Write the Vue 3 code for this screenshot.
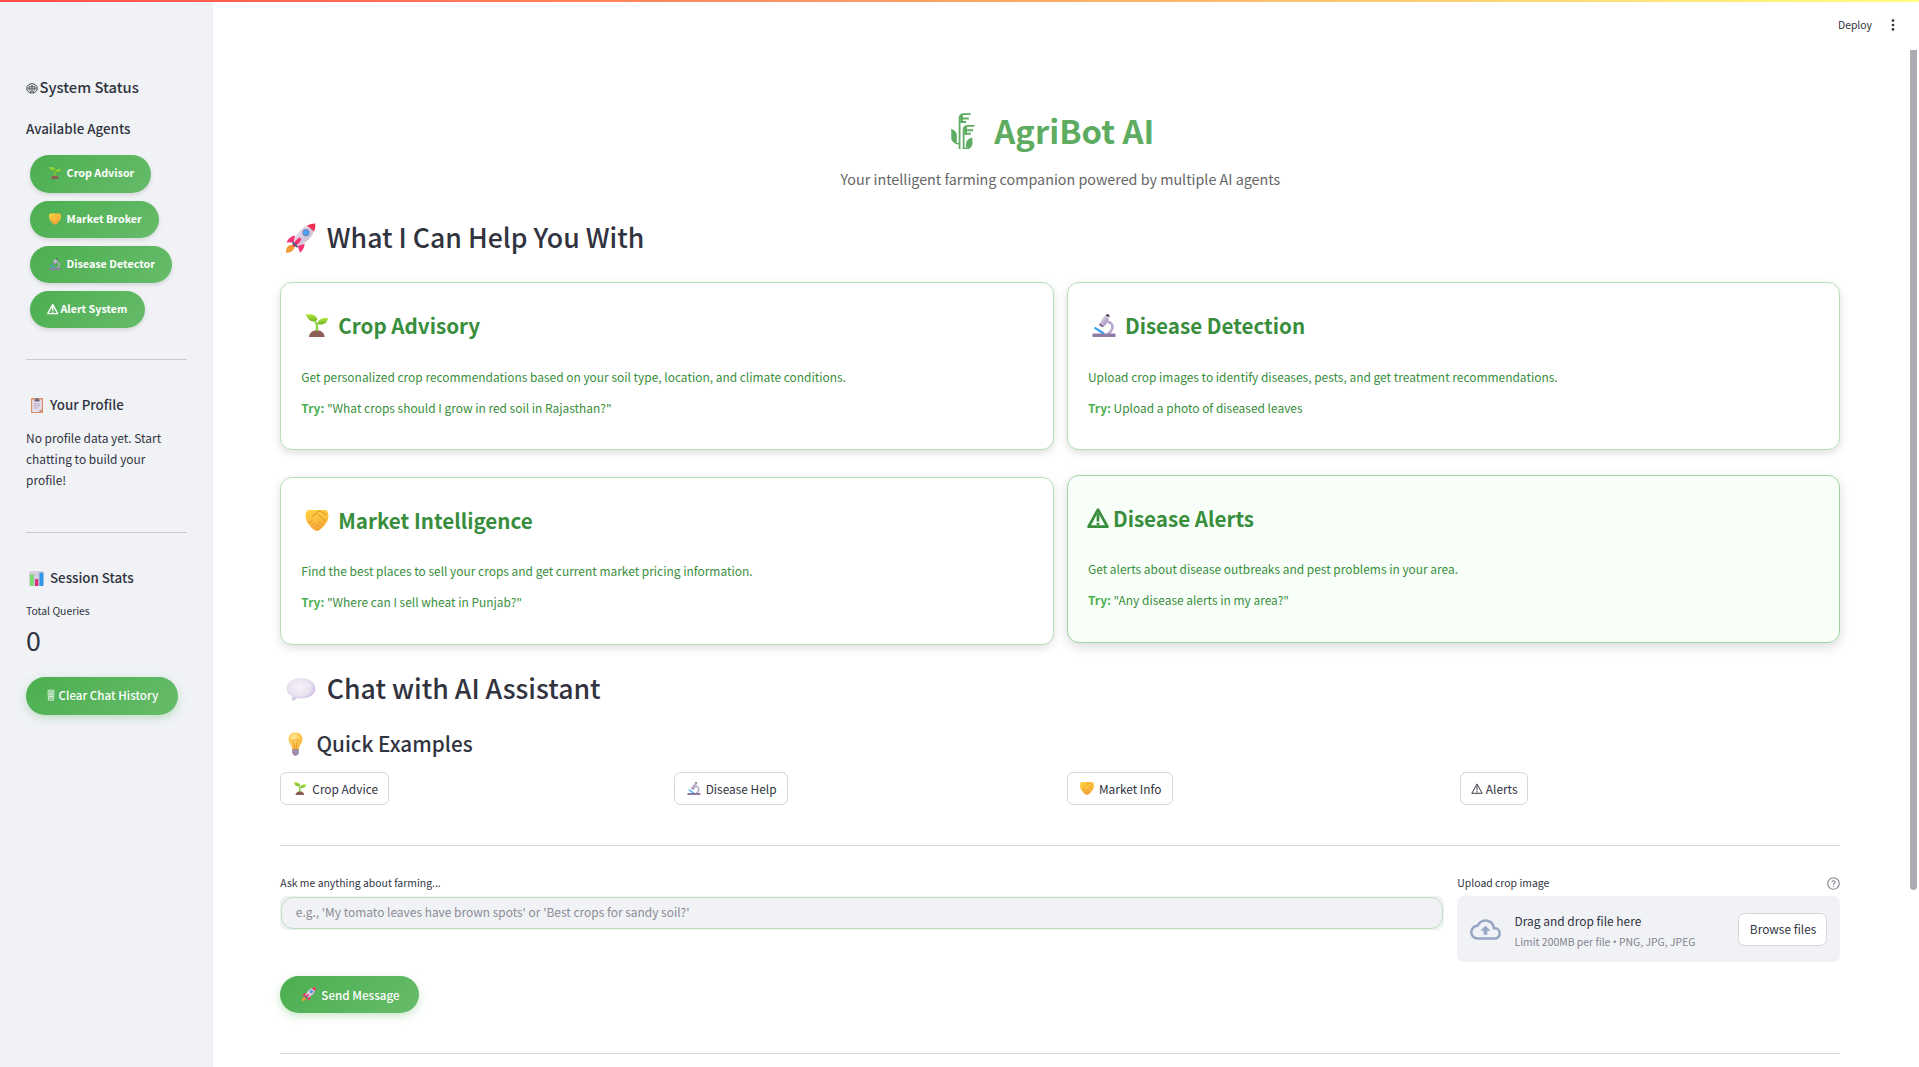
<script setup>
const agents = [
  { icon: 'sprout', label: 'Crop Advisor' },
  { icon: 'handshake', label: 'Market Broker' },
  { icon: 'microscope', label: 'Disease Detector' },
  { icon: 'warning', label: 'Alert System' },
]
const cards = [
  { icon: 'sprout', title: 'Crop Advisory', text: 'Get personalized crop recommendations based on your soil type, location, and climate conditions.', hint: '"What crops should I grow in red soil in Rajasthan?"' },
  { icon: 'microscope', title: 'Disease Detection', text: 'Upload crop images to identify diseases, pests, and get treatment recommendations.', hint: 'Upload a photo of diseased leaves' },
  { icon: 'handshake', title: 'Market Intelligence', text: 'Find the best places to sell your crops and get current market pricing information.', hint: '"Where can I sell wheat in Punjab?"' },
  { icon: 'warning', title: 'Disease Alerts', text: 'Get alerts about disease outbreaks and pest problems in your area.', hint: '"Any disease alerts in my area?"', hover: true },
]
const examples = [
  { icon: 'sprout', label: 'Crop Advice' },
  { icon: 'microscope', label: 'Disease Help' },
  { icon: 'handshake', label: 'Market Info' },
  { icon: 'warning', label: 'Alerts' },
]
</script>

<template>
  <div class="app">
    <svg class="defs" width="0" height="0" aria-hidden="true">
      <defs>
        <linearGradient id="leaf" x1="0" y1="0" x2="0" y2="1"><stop offset="0" stop-color="#b5e83a" /><stop offset="1" stop-color="#6fb52c" /></linearGradient>
        <linearGradient id="gold" x1="0" y1="0" x2="0.3" y2="1"><stop offset="0" stop-color="#ffd43f" /><stop offset="1" stop-color="#f8ab3c" /></linearGradient>
        <linearGradient id="steel" x1="0" y1="0" x2="1" y2="1"><stop offset="0" stop-color="#e4dcee" /><stop offset="1" stop-color="#9a86b4" /></linearGradient>
        <linearGradient id="hull" x1="0" y1="0" x2="1" y2="1"><stop offset="0" stop-color="#efe7f4" /><stop offset="1" stop-color="#bfb2cc" /></linearGradient>
        <radialGradient id="bubble" cx="0.45" cy="0.4" r="0.65"><stop offset="0" stop-color="#f7f3fa" /><stop offset="0.6" stop-color="#e9e1f1" /><stop offset="1" stop-color="#c3b1dc" /></radialGradient>
        <radialGradient id="glow" cx="0.4" cy="0.3" r="0.75"><stop offset="0" stop-color="#ffe79a" /><stop offset="0.5" stop-color="#ffcb52" /><stop offset="1" stop-color="#f7a83a" /></radialGradient>
      </defs>
      <symbol id="sprout" viewBox="0 0 24 24">
        <path d="M11.8 19V11.5Q11.8 9 9.5 7.8" fill="none" stroke="#7ccb2f" stroke-width="1.9" />
        <path d="M0 .6C6 -.4 11.2 .6 12.4 5.6C11.4 8.8 4.8 8.2 2.8 5Z" fill="url(#leaf)" />
        <path d="M23.8 4.6C19 3.5 13.2 5.2 12.1 10.4C15.8 11.8 20.8 10.4 22 8Z" fill="url(#leaf)" />
        <path d="M3.6 24C4.2 19.4 7.5 17 11.8 17S19.4 19.4 20 24Z" fill="#8d5e55" />
        <path d="M11.8 12V18" stroke="#86cd34" stroke-width="1.9" />
      </symbol>
      <symbol id="handshake" viewBox="0 0 24 22">
        <path d="M3.2 0H20.8Q23 0 23.6 3Q24.6 8 22.6 12Q19.6 17.6 14.4 21.3Q12 22.7 9.6 21.2Q6 19 1.8 13Q-.8 7 .5 2.6Q1.2 0 3.2 0Z" fill="url(#gold)" />
        <path d="M7 6.5Q10 4.5 13.2 1.4Q16.8 .8 21.5 5.2M13 4.6Q16.8 7.2 20.8 12.2" fill="none" stroke="#e29a2b" stroke-width="1.1" stroke-linecap="round" />
        <path d="M4 13.4L6.8 11.4M6.4 16.4L9.6 13.8M9 18.8L12 16M11.8 20.4L14 18M14.6 12.4L18.6 15.6M12.8 14.4L16 17.8" fill="none" stroke="#dd8a2a" stroke-width=".9" stroke-linecap="round" />
      </symbol>
      <symbol id="microscope" viewBox="0 0 24 24">
        <path d="M14.8 7.8Q22 8.8 20.6 15.2Q19.6 18.6 16 20.8" fill="none" stroke="#b7a7ca" stroke-width="2.7" />
        <path d="M8 8.8L12.4 1.8L17.4 4.6L13.2 12.4Z" fill="url(#steel)" />
        <path d="M14.2 .6Q15.4 -.5 17 .5Q18.4 1.6 17.4 3.3L13.6 2Z" fill="#5b4d62" />
        <path d="M7.4 9L12.4 12.2L10.6 14.2L7 12Z" fill="#8c739e" />
        <path d="M2.2 14.2L12 20.6" stroke="#36a3f2" stroke-width="2.3" />
        <rect x="0" y="20.3" width="24" height="3.7" rx="1.1" fill="#8e7aa5" />
      </symbol>
      <symbol id="warning" viewBox="0 0 24 22">
        <path d="M12 1.8L22.4 20.6H1.6Z" fill="none" stroke="currentColor" stroke-linejoin="round" />
        <path d="M12 6V14.8M12 16.2V19" stroke="currentColor" />
      </symbol>
      <symbol id="rocket" viewBox="0 0 30 30">
        <path d="M1 24.5Q3.5 20.5 8.2 22.2Q9.5 26.2 5.6 28.6Q2.6 30 0 29.8Q-.2 27 1 24.5Z" fill="#f59a31" />
        <path d="M9 12.4Q3 13.2 .6 19.6L8 19.2ZM18.6 20.8Q18.5 26 14 29.8L11.6 22.8Z" fill="#f53577" />
        <path d="M28.6 1C20 1 12.5 6 7.6 18.2L12.4 22.8C24 18 29.3 10.4 28.6 1Z" fill="url(#hull)" />
        <path d="M21 2.6Q25 .4 29.3 .4Q29.8 4.6 28 8.6Z" fill="#ee2e53" />
        <path d="M13.6 14.2Q9.8 16.4 6.2 22.2L8.2 24.2Q13.4 20.4 15.4 16.4Z" fill="#f0306e" />
        <path d="M7 18.4L12.2 23.6L10.8 24.8L5.8 20Z" fill="#4b5a8c" />
        <circle cx="20" cy="9.6" r="3.6" fill="#6b82b5" /><circle cx="20" cy="9.6" r="2.5" fill="#4aa5f5" />
      </symbol>
      <symbol id="speech" viewBox="0 0 30 24">
        <path d="M15 0C23.4 0 30 4.6 30 11S23.4 21.4 15 21.4Q12.8 21.4 11 21Q8.6 23.2 5.6 23.8Q6.6 21.6 5.8 19Q0 16.2 0 11C0 4.6 6.6 0 15 0Z" fill="url(#bubble)" />
      </symbol>
      <symbol id="bulb" viewBox="0 0 16 25">
        <path d="M8 0C12.8 0 15.6 3.6 15.4 7.8C15.2 12 12 13.4 11.4 18.4H4.6C4 13.4 .8 12 .6 7.8C.4 3.6 3.2 0 8 0Z" fill="url(#glow)" />
        <path d="M6.9 18V11.5Q4.2 11.2 4.8 8.8Q6 7.2 8 9Q10.2 7.2 11.2 8.8Q11.8 11.2 9.1 11.5V18" fill="none" stroke="#e99a27" stroke-width=".9" />
        <path d="M4.5 18.2H11.5V22Q10.8 24.8 8 25Q5.2 24.8 4.5 22Z" fill="#8f7a9b" />
        <path d="M4.5 20.1H11.5M4.8 22.4H11.2" stroke="#c9bad3" stroke-width=".7" />
      </symbol>
      <symbol id="clipboard" viewBox="0 0 12 15">
        <rect width="12" height="15" rx=".7" fill="#d88e62" />
        <path d="M1.2 1.6H10.8V11.4L8.2 14H1.2Z" fill="#e9e2f1" /><path d="M10.8 11.4H8.2V14Z" fill="#b9a9cb" />
        <path d="M3.4 1.5H4.5Q4.7 0 6 0T7.5 1.5H8.6V3.6H3.4Z" fill="#6d6477" />
        <path d="M2.6 5.8H9.4M2.6 7.9H9.4M2.6 10H7.4" stroke="#a294b3" stroke-width=".8" />
      </symbol>
      <symbol id="chart" viewBox="0 0 15 15">
        <rect width="15" height="15" rx=".8" fill="#d9d2e2" />
        <path d="M0 4H15M0 8H15M0 12H15M5 0V15M10 0V15" stroke="#b9b0c6" stroke-width=".5" />
        <rect x="1" y="3.4" width="3.6" height="11.6" fill="#76dd6c" /><rect x="6" y="8.2" width="3.3" height="6.8" fill="#d9307a" /><rect x="10.5" y="1.6" width="3.8" height="13.4" fill="#2f97e8" />
      </symbol>
      <symbol id="trash" viewBox="0 0 8 12">
        <path d="M.5 1.2H7.5M1 2.4L1.5 11.3H6.5L7 2.4ZM2.8 3V10.6M4 3V10.6M5.2 3V10.6M1.2 5H6.8M1.4 7.4H6.6" fill="none" stroke="currentColor" stroke-width=".65" />
      </symbol>
      <symbol id="globe" viewBox="0 0 12 11">
        <ellipse cx="6" cy="5.4" rx="5.2" ry="4.7" fill="none" stroke="currentColor" stroke-width=".9" />
        <path d="M3.2 3.4H8.8V7H3.2ZM6 2V7M1.2 5.2H10.8M4 8.7H8" fill="none" stroke="currentColor" stroke-width=".7" />
      </symbol>
      <symbol id="wheat" viewBox="0 0 24 36">
        <g fill="none" stroke="currentColor">
          <path d="M8.6 36V5Q8.8 1.2 13 1.1H19.6" stroke-width="1.8" />
          <path d="M9.4 5.4H17.8M9.4 8.9H15.2" stroke-width="2" />
          <path d="M12.6 36V17Q12.8 13 17 12.9H23.4" stroke-width="1.8" />
          <path d="M13.4 17.2H22M13.4 20.7H19.8" stroke-width="2" />
          <path d="M1.8 26Q2 30.6 8.4 30.8M13 35.2H17Q20.6 34.4 20.7 29" stroke-width="1.6" />
        </g>
        <path d="M9.4 2.2H12V9.8H9.4ZM13.4 14H16V21.7H13.4Z" fill="currentColor" />
        <path d="M.2 15.8Q6 18.4 5.8 22V29.4Q1 29.4 .3 26Z" fill="currentColor" />
        <path d="M21.4 24.6Q15 26.4 15 31V34.6H17.6Q21.2 33 21.4 29.4Z" fill="currentColor" />
      </symbol>
    </svg>

    <aside class="sidebar">
      <h3 class="side-title"><svg class="i-globe"><use href="#globe" /></svg>System Status</h3>
      <h4 class="side-sub">Available Agents</h4>
      <div class="agents">
        <span v-for="a in agents" :key="a.label" class="pill" :class="a.icon">
          <svg class="pill-icon"><use :href="'#' + a.icon" /></svg>{{ a.label }}
        </span>
      </div>
      <hr class="hr-a">
      <h4 class="side-sub profile"><svg class="i-clip"><use href="#clipboard" /></svg>Your Profile</h4>
      <p class="profile-text">No profile data yet. Start chatting to build your profile!</p>
      <hr class="hr-b">
      <h4 class="side-sub stats"><svg class="i-chart"><use href="#chart" /></svg>Session Stats</h4>
      <div class="metric-label">Total Queries</div>
      <div class="metric">0</div>
      <button class="primary clear"><svg class="i-trash"><use href="#trash" /></svg>Clear Chat History</button>
    </aside>

    <main class="main">
      <header class="hero">
        <h1><svg class="i-wheat"><use href="#wheat" /></svg>AgriBot AI</h1>
        <p>Your intelligent farming companion powered by multiple AI agents</p>
      </header>

      <h2 class="help"><svg class="i-rocket"><use href="#rocket" /></svg>What I Can Help You With</h2>
      <section class="cards">
        <article v-for="c in cards" :key="c.title" class="card" :class="{ hover: c.hover }">
          <h3 :class="c.icon"><svg class="card-icon"><use :href="'#' + c.icon" /></svg>{{ c.title }}</h3>
          <p>{{ c.text }}</p>
          <p><b>Try:</b> {{ c.hint }}</p>
        </article>
      </section>

      <h2 class="chat"><svg class="i-speech"><use href="#speech" /></svg>Chat with AI Assistant</h2>
      <h3 class="quick"><svg class="i-bulb"><use href="#bulb" /></svg>Quick Examples</h3>
      <div class="examples">
        <div v-for="e in examples" :key="e.label">
          <button class="plain" :class="e.icon"><svg class="ex-icon"><use :href="'#' + e.icon" /></svg>{{ e.label }}</button>
        </div>
      </div>
      <hr class="hr-c">

      <div class="form">
        <div class="ask">
          <label>Ask me anything about farming...</label>
          <div class="field"><div class="inner">e.g., 'My tomato leaves have brown spots' or 'Best crops for sandy soil?'</div></div>
          <button class="primary send"><svg class="i-send"><use href="#rocket" /></svg>Send Message</button>
        </div>
        <div class="upload">
          <div class="upload-label">
            <label>Upload crop image</label>
            <svg class="i-help" viewBox="0 0 13 13"><circle cx="6.5" cy="6.5" r="5.7" /><path d="M4.9 5.3Q4.9 3.7 6.5 3.7T8.1 5.2Q8.1 6 7.2 6.5T6.5 7.7M6.5 8.7V9.8" /></svg>
          </div>
          <div class="drop">
            <svg class="i-cloud" viewBox="0 4 24 16"><path d="M19.35 10.04A7.49 7.49 0 0 0 12 4C9.11 4 6.6 5.64 5.35 8.04A5.994 5.994 0 0 0 0 14c0 3.31 2.69 6 6 6h13c2.76 0 5-2.24 5-5 0-2.64-2.05-4.78-4.65-4.96zM19 18H6c-2.21 0-4-1.79-4-4 0-2.05 1.53-3.76 3.56-3.97l1.07-.11.5-.95A5.469 5.469 0 0 1 12 6c2.62 0 4.88 1.86 5.39 4.43l.3 1.5 1.53.11A2.98 2.98 0 0 1 22 15c0 1.65-1.35 3-3 3zM8 13h2.55v3h2.9v-3H16l-4-4z" /></svg>
            <div class="drop-text">
              <div class="drop-main">Drag and drop file here</div>
              <div class="drop-sub">Limit 200MB per file <i>•</i> PNG, JPG, JPEG</div>
            </div>
            <button class="plain browse">Browse files</button>
          </div>
        </div>
      </div>
      <hr class="hr-d">
    </main>

    <div class="toolbar">
      <span>Deploy</span>
      <svg viewBox="0 0 4 12"><circle cx="2" cy="1.6" r="1.35" /><circle cx="2" cy="6" r="1.35" /><circle cx="2" cy="10.4" r="1.35" /></svg>
    </div>
    <div class="decoration"></div>
    <div class="scrollbar"></div>
  </div>
</template>

<style>
body { margin: 0; background: #fff; }
</style>

<style scoped>
* { box-sizing: border-box; }
h1, h2, h3, h4, p { margin: 0; font-weight: 500; }
svg { flex: none; display: block; }
button { font: inherit; border: 0; margin: 0; padding: 0; }
hr { border: 0; height: 1px; width: 100%; margin: 0; background: #d6d6d9; }
.app {
  position: relative; display: flex; width: 100%; height: 100vh; overflow: hidden;
  font-family: "Noto Sans CJK SC", "Noto Sans", sans-serif; font-size: 11.94px; color: #31333f;
}
.defs { position: absolute; }

.sidebar { width: 213px; flex: none; background: #f0f2f6; padding: 77px 26px 0; display: flex; flex-direction: column; align-items: flex-start; }
.side-title { display: flex; align-items: center; font-size: 14.75px; line-height: 20px; height: 20px; }
.i-globe { width: 12px; height: 11px; margin: 2px 1.5px 0 0; }
.side-sub { display: flex; align-items: center; font-size: 13.35px; line-height: 20px; height: 20px; margin-top: 22px; }
.agents { display: flex; flex-direction: column; align-items: flex-start; gap: 8px; margin: 16px 0 0 4.4px; }
.pill {
  display: flex; align-items: center; height: 37px; padding: 0 17.2px 2px 19px; border-radius: 20px; white-space: nowrap;
  color: #fff; font-size: 10.75px; font-weight: 700; background: linear-gradient(135deg, #4caf50, #66bb6a);
  box-shadow: 0 2px 4px rgba(0, 0, 0, .12);
}
.pill:first-child { height: 38px; padding-bottom: 3px; }
.pill-icon { width: 12px; height: 12px; margin-right: 5.2px; margin-top: 1px; }
.pill.warning { padding-left: 16.5px; }
.pill.warning .pill-icon { width: 11.5px; margin-right: 2px; stroke-width: 2.9; }
.sidebar hr { width: 161px; background: #c9cbd1; }
.hr-a { margin-top: 31px; }
.profile { margin-top: 35px; }
.i-clip { width: 12px; height: 15px; margin: 0 7.5px 0 4.5px; }
.profile-text { width: 150px; margin-top: 12px; line-height: 21px; font-weight: 400; }
.hr-b { margin-top: 42px; }
.stats { margin-top: 35px; }
.i-chart { width: 15px; height: 15px; margin: 0 6px 0 3px; }
.metric-label { font-size: 10.42px; line-height: 16px; margin-top: 15px; }
.metric { font-size: 26.8px; line-height: 36px; margin-top: 3px; }
.primary {
  display: flex; align-items: center; border-radius: 20px; color: #fff; font-size: 11.6px; font-weight: 500; white-space: nowrap;
  background: linear-gradient(135deg, #4caf50, #66bb6a); box-shadow: 0 3px 8px rgba(76, 175, 80, .3);
}
.clear { width: 152px; height: 38px; margin-top: 19px; padding: 0 0 2px 20.5px; }
.i-trash { width: 8px; height: 12px; margin-right: 4px; }

.main { flex: 1; min-width: 0; padding: 108px 78.7px 0 67.3px; }
.hero { display: flex; flex-direction: column; align-items: center; }
.hero h1 { display: flex; align-items: center; font-size: 32.8px; font-weight: 700; line-height: 44px; height: 44px; color: #5dac61; margin-right: 15.5px; }
.i-wheat { width: 24px; height: 36px; margin: 1px 19.5px 0 0; }
.hero p { font-size: 14.32px; font-weight: 400; line-height: 24px; margin-top: 15px; color: #666; }
h2 { display: flex; align-items: center; font-size: 26.65px; line-height: 36px; height: 36px; }
.help { margin-top: 28px; }
.i-rocket { width: 30px; height: 30px; margin: 2px 11px 0 5.5px; }
.cards { display: grid; grid-template-columns: 1fr 1fr; column-gap: 13.3px; row-gap: 27px; margin-top: 27px; }
.card {
  height: 168px; padding: 28px 20px 0; border: 1px solid #b5dfb7; border-radius: 12px; background: #fff; color: #388e3c;
  box-shadow: 0 3px 9px rgba(0, 0, 0, .13);
}
.card.hover { margin-top: -2px; border: 1.6px solid #9fd4a2; background: #f8fff9; height: 168px; box-shadow: 0 4px 12px rgba(0, 0, 0, .14); }
.card h3 { display: flex; align-items: center; font-size: 20.6px; font-weight: 700; line-height: 28px; height: 28px; }
.card-icon { width: 24px; height: 23px; margin: 0 9px 0 4px; }
.card h3.handshake .card-icon { height: 21px; }
.card h3.warning .card-icon { width: 22px; height: 20px; margin: -1px 4px 0 -1px; stroke-width: 3; }
.card p { font-weight: 400; line-height: 20px; margin-top: 28px; }
.card:nth-child(n+3) p { margin-top: 27px; }
.card p + p, .card:nth-child(n+3) p + p { margin-top: 11px; }
.card b { color: #4caf50; font-weight: 700; }
.chat { margin-top: 25px; }
.i-speech { width: 30px; height: 23px; margin: 2px 11px 0 5.5px; }
.quick { display: flex; align-items: center; font-size: 20.7px; line-height: 28px; height: 28px; margin-top: 23px; }
.i-bulb { width: 15px; height: 24px; margin: 1px 13px 0 8.2px; }
.examples { display: grid; grid-template-columns: repeat(4, 1fr); column-gap: 13.3px; margin-top: 15px; }
.plain {
  display: flex; align-items: center; height: 33px; padding: 0 10px 1px 12px; border: 1px solid #d6d6d9; border-radius: 6.5px;
  background: #fff; color: #31333f; font-size: 11.9px; font-weight: 400; white-space: nowrap;
}
.ex-icon { width: 14px; height: 13px; margin-right: 5px; margin-top: 1px; }
.plain.warning { padding-left: 9.5px; padding-right: 9.5px; }
.plain.warning .ex-icon { width: 12px; height: 11px; margin-right: 3px; stroke-width: 1.9; }
.hr-c { margin-top: 40px; }
.form { display: flex; gap: 13px; margin-top: 29px; height: 138px; }
.ask { width: 1164px; }
label { display: block; font-size: 10.43px; line-height: 16px; height: 16px; }
.field { height: 34px; margin-top: 5px; padding: 1px; border-radius: 6.5px; background: #f0f2f6; }
.inner { height: 32px; line-height: 28px; padding-left: 13.5px; border: 1px solid #b9dfbb; border-radius: 12px; color: #8b8c95; }
.send { width: 139px; height: 37px; margin-top: 46px; padding: 0 0 1px 22px; font-size: 11.7px; }
.i-send { width: 14px; height: 14px; margin-right: 5px; }
.upload { flex: 1; }
.upload-label { display: flex; justify-content: space-between; align-items: center; height: 16px; }
.i-help { width: 13px; height: 13px; fill: none; stroke: #7f808a; stroke-width: 1.1; }
.drop { display: flex; align-items: center; height: 66px; margin-top: 5px; padding: 0 13px; border-radius: 6.5px; background: #f0f2f6; }
.i-cloud { width: 31px; height: 21px; fill: #97a6c3; }
.drop-text { margin-left: 13.3px; padding-top: 3px; flex: 1; }
.drop-main { line-height: 20px; }
.drop-sub { font-size: 10.42px; line-height: 18px; color: #83848e; white-space: nowrap; margin-top: 2px; }
.drop-sub i { font-family: "Open Sans", sans-serif; font-style: normal; }
.browse { padding: 0 10px 1px 11px; }
.hr-d { margin-top: 40px; }

.toolbar { position: absolute; top: 14px; right: 24px; display: flex; align-items: center; height: 22px; gap: 19px; font-size: 10.42px; line-height: 20px; }
.toolbar svg { width: 4px; height: 12px; fill: #31333f; }
.decoration { position: absolute; top: 0; left: 0; right: 0; height: 2px; background: linear-gradient(90deg, #ff4b4b, #fffd80); }
.scrollbar { position: absolute; top: 50px; right: 2px; width: 7px; height: 840px; border-radius: 0 0 4px 4px; background: #adacb2; }
</style>
